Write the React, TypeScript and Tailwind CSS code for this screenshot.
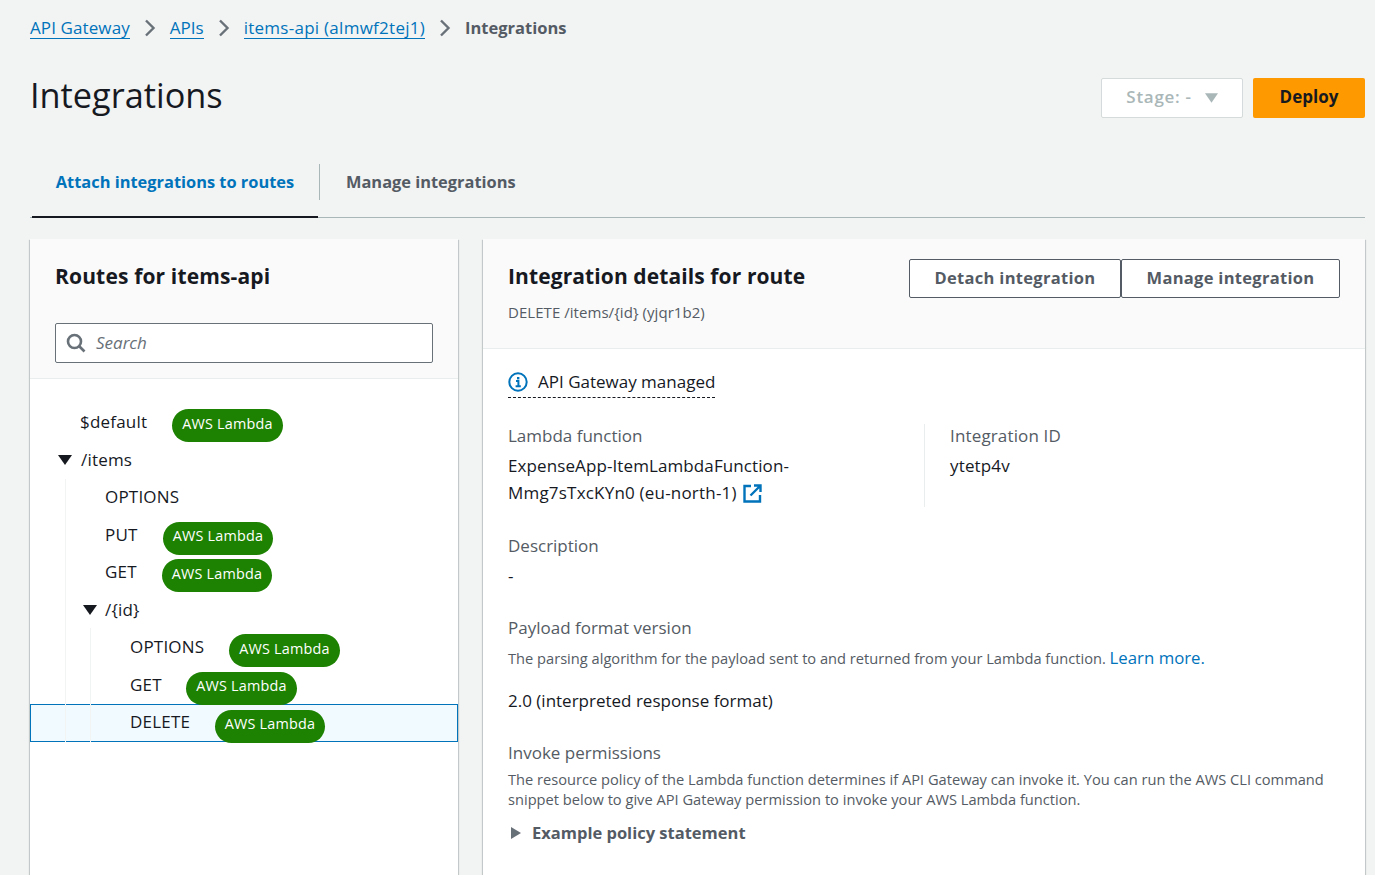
const font = "font-['Open_Sans','Noto_Sans',sans-serif]";

function Badge({ className = 'w-[111px]' }: { className?: string }) {
    return (
        <span className={`mt-[6px] inline-flex h-[33px] shrink-0 items-center justify-center rounded-full bg-[#1d8102] pb-[4px] text-[14.4px] font-medium text-white ${className}`}>
            AWS Lambda
        </span>
    );
}

function Caret({ className = '' }: { className?: string }) {
    return (
        <svg width="14" height="10" viewBox="0 0 14 10" className={`shrink-0 ${className}`}>
            <path d="M0 0h14L7 10z" fill="#16191f" />
        </svg>
    );
}

function Chevron() {
    return (
        <svg width="14" height="18" viewBox="0 0 14 18" className="mx-[13px] shrink-0">
            <path d="M3 1.5l7.5 7.5-7.5 7.5" fill="none" stroke="#687078" strokeWidth="2.4" />
        </svg>
    );
}

const rowText = 'flex h-[37.5px] items-center text-[17px] tracking-[0.2px] text-[#16191f]';
const panelShadow = 'shadow-[0_1px_1px_0_rgba(0,28,36,0.3),1px_1px_1px_0_rgba(0,28,36,0.15),-1px_1px_1px_0_rgba(0,28,36,0.15)]';

export default function App() {
    return (
        <div className={`h-[875px] overflow-hidden bg-[#f2f3f3] pl-[30px] pr-[10px] ${font}`}>
            <div className="flex h-[56px] items-center text-[17px]">
                <a className="border-b border-[#0073bb] leading-[20px] tracking-[0.1px] text-[#0073bb]">API Gateway</a>
                <Chevron />
                <a className="border-b border-[#0073bb] leading-[20px] text-[#0073bb]">APIs</a>
                <Chevron />
                <a className="border-b border-[#0073bb] leading-[20px] tracking-[0.27px] text-[#0073bb]">items-api (almwf2tej1)</a>
                <Chevron />
                <span className="text-[16.5px] font-bold text-[#545b64]">Integrations</span>
            </div>

            <div className="flex h-[78px] items-center justify-between">
                <h1 className="text-[34.3px] font-normal text-[#16191f]">Integrations</h1>
                <div className="mt-[6px] flex gap-[10px]">
                    <div className="flex h-[40px] w-[142px] items-center justify-center gap-[13px] rounded-[2px] border border-[#d5dbdb] bg-white pb-[2px] text-[17px] font-semibold tracking-[0.7px] text-[#aab7b8]">
                        Stage: -
                        <svg width="13" height="10" viewBox="0 0 14 10" className="mt-[2px]">
                            <path d="M0 0h14L7 10z" fill="#aab7b8" />
                        </svg>
                    </div>
                    <button className="h-[40px] w-[112px] rounded-[2px] bg-[#ff9900] pb-[2px] text-[17px] font-bold text-[#16191f]">Deploy</button>
                </div>
            </div>

            <div className="mt-[10px] flex h-[74px] items-stretch border-b border-[#aab7b8]">
                <div className="-mb-px ml-[2px] flex w-[286px] items-center justify-center border-b-2 border-[#16191f] pt-[5px] text-[16.4px] font-bold text-[#0073bb]">
                    Attach integrations to routes
                </div>
                <div className="mb-[17px] ml-px mt-[20px] w-px bg-[#aab7b8]" />
                <div className="flex items-center pl-[26px] pt-[3px] text-[16.4px] font-bold text-[#545b64]">
                    Manage integrations
                </div>
            </div>

            <div className="mt-[21px] flex gap-[25px]">
                <div className={`h-[640px] w-[428px] shrink-0 bg-white ${panelShadow}`}>
                    <div className="h-[140px] border-b border-[#eaeded] bg-[#fafafa] px-[25px] pt-[22px]">
                        <h2 className="text-[21px] font-bold leading-[30px] tracking-[0.15px] text-[#16191f]">Routes for items-api</h2>
                        <div className="mt-[32px] flex h-[40px] w-[378px] items-center rounded-[2px] border border-[#687078] bg-white pl-[10px]">
                            <svg width="20" height="20" viewBox="0 0 20 20" fill="none" stroke="#687078" strokeWidth="2.6">
                                <circle cx="8.5" cy="8.5" r="6.5" />
                                <path d="M13 13l5.5 5.5" />
                            </svg>
                            <span className="ml-[10px] text-[17px] italic text-[#687078]">Search</span>
                        </div>
                    </div>

                    <div className="relative pt-[25px]">
                        <div className="absolute left-[35px] top-[100px] h-[263px] w-px bg-[#f2f3f3]" />
                        <div className="absolute left-[60px] top-[249px] h-[114px] w-px bg-[#f2f3f3]" />
                        <div className={`${rowText} pl-[50px]`}>
                            <span className="-mt-[2px] w-[92px]">$default</span>
                            <Badge />
                        </div>
                        <div className={`${rowText} pl-[28px]`}>
                            <Caret className="mr-[9px]" />
                            <span className="-mt-[2px]">/items</span>
                        </div>
                        <div className={`${rowText} pl-[75px]`}>
                            <span className="-mt-[2px]">OPTIONS</span>
                        </div>
                        <div className={`${rowText} pl-[75px]`}>
                            <span className="-mt-[2px] w-[58px]">PUT</span>
                            <Badge className="w-[110px]" />
                        </div>
                        <div className={`${rowText} pl-[75px]`}>
                            <span className="-mt-[2px] w-[57px]">GET</span>
                            <Badge className="w-[110px]" />
                        </div>
                        <div className={`${rowText} pl-[53px]`}>
                            <Caret className="mr-[8px]" />
                            <span className="-mt-[2px]">/{'{id}'}</span>
                        </div>
                        <div className={`${rowText} pl-[100px]`}>
                            <span className="-mt-[2px] w-[99px]">OPTIONS</span>
                            <Badge />
                        </div>
                        <div className={`${rowText} pl-[100px]`}>
                            <span className="-mt-[2px] w-[56px]">GET</span>
                            <Badge />
                        </div>
                        <div className="flex h-[38px] items-center border border-[#0073bb] bg-[#f1faff] pl-[99px] text-[17px] tracking-[0.2px] text-[#16191f]">
                            <span className="-mt-[2px] w-[85px]">DELETE</span>
                            <Badge className="w-[110px]" />
                        </div>
                    </div>
                </div>

                <div className={`h-[640px] min-w-0 flex-1 bg-white ${panelShadow}`}>
                    <div className="flex h-[110px] justify-between border-b border-[#eaeded] bg-[#fafafa] pl-[25px] pr-[25px] pt-[20px]">
                        <div>
                            <h2 className="mt-[2px] text-[21px] font-bold leading-[30px] tracking-[0.1px] text-[#16191f]">Integration details for route</h2>
                            <p className="mt-[11px] text-[15px] leading-[20px] tracking-[0.05px] text-[#545b64]">DELETE /items/{'{id}'} (yjqr1b2)</p>
                        </div>
                        <div className="flex h-[39px]">
                            <button className="w-[212px] rounded-[2px] border border-[#545b64] bg-white pb-px text-[16.5px] font-bold tracking-[0.3px] text-[#545b64]">Detach integration</button>
                            <button className="w-[219px] rounded-[2px] border border-[#545b64] bg-white pb-px text-[16.5px] font-bold tracking-[0.3px] text-[#545b64]">Manage integration</button>
                        </div>
                    </div>

                    <div className="pl-[25px] pr-[25px] text-[17px] text-[#16191f]">
                        <div className="mt-[21px] inline-flex h-[28px] items-center border-b border-dashed border-[#16191f] pb-[4px]">
                            <svg width="20" height="20" viewBox="0 0 20 20" className="mr-[10px]">
                                <circle cx="10" cy="10" r="8.7" fill="none" stroke="#0073bb" strokeWidth="2" />
                                <path d="M8 9h2.4v5M7.6 14.2h5.2" fill="none" stroke="#0073bb" strokeWidth="2" />
                                <rect x="9" y="5" width="2.4" height="2.4" fill="#0073bb" />
                            </svg>
                            API Gateway managed
                        </div>

                        <div className="mt-[26px] flex">
                            <div className="w-[417px] border-r border-[#eaeded] pb-px">
                                <div className="leading-[24px] text-[#545b64]">Lambda function</div>
                                <div className="mt-[4px] leading-[27px]">
                                    <span className="tracking-[0.1px]">ExpenseApp-ItemLambdaFunction-</span>
                                    <br />
                                    <span className="tracking-[0.2px]">Mmg7sTxcKYn0 (eu-north-1)</span>
                                    <svg width="19" height="19" viewBox="0 0 19 19" fill="none" stroke="#0073bb" strokeWidth="2.4" className="ml-[6px] inline-block align-[-4px]">
                                        <path d="M8 2H1.5v15.5H17V11" />
                                        <path d="M7.5 11.5L17 2M11 1.5h6.5V8" />
                                    </svg>
                                </div>
                            </div>
                            <div className="pl-[25px] tracking-[0.15px]">
                                <div className="leading-[24px] text-[#545b64]">Integration ID</div>
                                <div className="mt-[4px] leading-[27px]">ytetp4v</div>
                            </div>
                        </div>

                        <div className="mt-[27px] leading-[24px] text-[#545b64]">Description</div>
                        <div className="mt-[6px] leading-[24px]">-</div>

                        <div className="mt-[28px] leading-[24px] text-[#545b64]">Payload format version</div>
                        <p className="mt-[8px] text-[14.65px] leading-[20px] text-[#545b64]">
                            The parsing algorithm for the payload sent to and returned from your Lambda function. <a className="text-[16.8px] text-[#0073bb]">Learn more.</a>
                        </p>
                        <div className="mt-[21px] leading-[24px]">2.0 (interpreted response format)</div>

                        <div className="mt-[28px] leading-[24px] text-[#545b64]">Invoke permissions</div>
                        <p className="mt-[4px] text-[14.65px] leading-[20px] text-[#545b64]">
                            The resource policy of the Lambda function determines if API Gateway can invoke it. You can run the AWS CLI command snippet below to give API Gateway permission to invoke your AWS Lambda function.
                        </p>
                        <div className="mt-[12px] flex items-center text-[16.5px] font-bold text-[#545b64]">
                            <svg width="12" height="14" viewBox="0 0 12 14" className="ml-[2px] mr-[10px]">
                                <path d="M1 1l10 6-10 6z" fill="#687078" />
                            </svg>
                            Example policy statement
                        </div>
                    </div>
                </div>
            </div>
        </div>
    );
}
